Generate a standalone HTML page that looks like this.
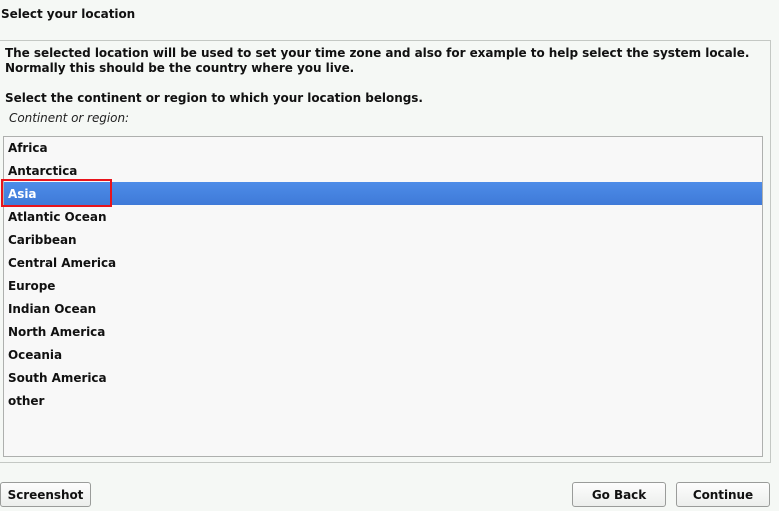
<!DOCTYPE html>
<html><head><style>
body{margin:0;width:779px;height:511px;background:#f5f8f5;font-family:"DejaVu Sans","Liberation Sans",sans-serif;font-weight:bold;font-size:12px;color:#111;position:relative;overflow:hidden;letter-spacing:-0.04px}
.a{position:absolute;white-space:nowrap}
.panel{position:absolute;left:-1px;top:40px;width:770px;height:421px;border:1px solid #c4c8c4;background:#f5f8f5}
.list{position:absolute;left:3px;top:136px;width:758px;height:319px;border:1px solid #aeb0ae;background:#f8f8f8}
.row{position:absolute;left:4px;height:23px;line-height:23px}
.sel{position:absolute;left:0;top:45px;width:758px;height:23px;background:linear-gradient(#4d8ce8,#3f7ad8)}
.btn{position:absolute;top:482px;height:23px;border:1px solid #9a9c9a;border-radius:3px;background:linear-gradient(#fdfdfd,#eceeec);text-align:center;line-height:24px}
</style></head><body>
<div class="a" style="left:1px;top:7px">Select your location</div>
<div class="panel"></div>
<div class="a" style="left:5px;top:46px;line-height:15px">The selected location will be used to set your time zone and also for example to help select the system locale.<br>Normally this should be the country where you live.</div>
<div class="a" style="left:5px;top:91px">Select the continent or region to which your location belongs.</div>
<div class="a" style="left:9px;top:111px;font-weight:normal;font-style:italic;color:#222">Continent or region:</div>
<div class="list">
<div class="sel"></div>
<div class="row" style="top:0px">Africa</div>
<div class="row" style="top:23px">Antarctica</div>
<div class="row" style="top:46px;color:#fff">Asia</div>
<div class="row" style="top:69px">Atlantic Ocean</div>
<div class="row" style="top:92px">Caribbean</div>
<div class="row" style="top:115px">Central America</div>
<div class="row" style="top:138px">Europe</div>
<div class="row" style="top:161px">Indian Ocean</div>
<div class="row" style="top:184px">North America</div>
<div class="row" style="top:207px">Oceania</div>
<div class="row" style="top:230px">South America</div>
<div class="row" style="top:253px">other</div>
</div>
<div class="a" style="left:1px;top:179px;width:107px;height:24px;border:2px solid #e8141c"></div>
<div class="btn" style="left:0;width:89px">Screenshot</div>
<div class="btn" style="left:572px;width:92px">Go Back</div>
<div class="btn" style="left:676px;width:92px">Continue</div>
</body></html>
